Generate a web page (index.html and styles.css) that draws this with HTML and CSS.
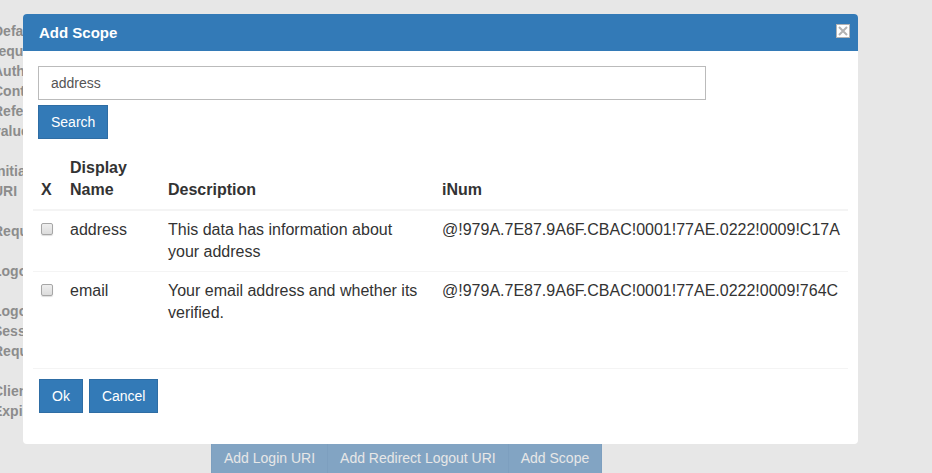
FILE: index.html
```html
<!DOCTYPE html>
<html lang="en">
<head>
<meta charset="utf-8">
<title>Add Scope</title>
<link rel="stylesheet" href="styles.css">
</head>
<body>
<main class="page">
  <div class="labels">
    <p>Default<br>requested<br>Authn<br>Context<br>Reference<br>values</p>
    <p>Initiate<br>URI</p>
    <p>Request</p>
    <p>Logout</p>
    <p>Logout<br>Session<br>Required</p>
    <p>Client<br>Expires</p>
  </div>
  <div class="page-actions">
    <button type="button" class="btn">Add Login URI</button>
    <button type="button" class="btn">Add Redirect Logout URI</button>
    <button type="button" class="btn">Add Scope</button>
  </div>
</main>

<section class="modal" role="dialog" aria-labelledby="modal-title">
  <header class="modal-header">
    <h1 id="modal-title">Add Scope</h1>
    <button type="button" class="close" aria-label="Close">
      <svg width="14" height="14" viewBox="0 0 14 14" aria-hidden="true">
        <rect x=".5" y=".5" width="13" height="13" fill="#fff" stroke="#b3b3b3"/>
        <path d="M3 3l8 8M11 3l-8 8" fill="none" stroke="#b3b3b3" stroke-width="2"/>
      </svg>
    </button>
  </header>
  <form class="modal-body">
    <div class="search">
      <input type="text" class="search-input" aria-label="Search scopes" value="address">
      <button type="button" class="btn">Search</button>
    </div>
    <table class="scopes">
      <colgroup><col class="col-check"><col class="col-name"><col class="col-desc"><col></colgroup>
      <thead>
        <tr><th>X</th><th>Display Name</th><th>Description</th><th>iNum</th></tr>
      </thead>
      <tbody>
        <tr>
          <td><input type="checkbox" class="check" aria-labelledby="scope-address"></td>
          <td id="scope-address">address</td>
          <td>This data has information about your address</td>
          <td>@!979A.7E87.9A6F.CBAC!0001!77AE.0222!0009!C17A</td>
        </tr>
        <tr>
          <td><input type="checkbox" class="check" aria-labelledby="scope-email"></td>
          <td id="scope-email">email</td>
          <td>Your email address and whether its verified.</td>
          <td>@!979A.7E87.9A6F.CBAC!0001!77AE.0222!0009!764C</td>
        </tr>
      </tbody>
    </table>
    <footer class="modal-footer">
      <button type="button" class="btn">Ok</button>
      <button type="button" class="btn">Cancel</button>
    </footer>
  </form>
</section>
</body>
</html>
```

FILE: styles.css
```css
* {
  box-sizing: border-box;
}

html,
body {
  height: 100%;
}

body {
  margin: 0;
  overflow: hidden;
  background: #e7e7e7;
  color: #333;
  font: 14px/20px "Liberation Sans", Arial, sans-serif;
}

.page {
  padding-top: 21px;
}

.labels {
  margin-left: -7px;
  color: #8c8c8c;
  font-weight: bold;
}

.labels p {
  margin: 0 0 20px;
}

.page-actions {
  display: flex;
  margin-left: 211px;
}

.btn {
  padding: 6px 12px;
  border: 1px solid #2e6da4;
  border-radius: 0;
  background: #337ab7;
  color: #fff;
  font: inherit;
  cursor: pointer;
}

.page-actions .btn {
  border-color: #7d9fbf;
  background: #82a4c3;
  color: #e7e7e7;
}

.page-actions .btn + .btn {
  margin-left: -1px;
}

.modal {
  position: absolute;
  top: 14px;
  left: 23px;
  right: 74px;
  overflow: hidden;
  border-radius: 4px;
  background: #fff;
}

.modal-header {
  display: flex;
  align-items: flex-start;
  justify-content: space-between;
  padding: 9px 8px 8px 16px;
  background: #337ab7;
  color: #fff;
}

.modal-header h1 {
  margin: 0;
  font-size: 15px;
  line-height: 20px;
}

.close {
  display: flex;
  margin-top: 1px;
  padding: 0;
  border: 0;
  background: none;
  cursor: pointer;
}

.modal-body {
  padding: 15px 10px 31px;
}

.search {
  display: flex;
  flex-direction: column;
  align-items: flex-start;
  gap: 5px;
  padding: 0 5px;
}

.search-input {
  width: 83%;
  height: 34px;
  padding: 6px 12px;
  border: 1px solid #bbb;
  background: #fff;
  color: #555;
  font: inherit;
}

.scopes {
  width: 100%;
  margin-top: 10px;
  border-collapse: separate;
  border-spacing: 0;
  table-layout: fixed;
  font-size: 16px;
  line-height: 22px;
}

.col-check {
  width: 29px;
}

.col-name {
  width: 98px;
}

.col-desc {
  width: 274px;
}

.scopes th,
.scopes td {
  padding: 8px;
  text-align: left;
}

.scopes th {
  border-bottom: 2px solid #f4f4f4;
  vertical-align: bottom;
}

.scopes td {
  vertical-align: top;
}

.scopes tr + tr td {
  border-top: 1px solid #f4f4f4;
}

.check {
  display: block;
  width: 12px;
  height: 12px;
  margin: 4px 0 0;
  appearance: none;
  border: 1px solid #a6a6a6;
  border-radius: 2px;
  background: linear-gradient(#eee, #dcdcdc);
  box-shadow: 0 1px 1px #ddd;
}

.modal-footer {
  display: flex;
  gap: 6px;
  margin-top: 36px;
  padding: 10px 6px 0;
  border-top: 1px solid #f4f4f4;
}
```
